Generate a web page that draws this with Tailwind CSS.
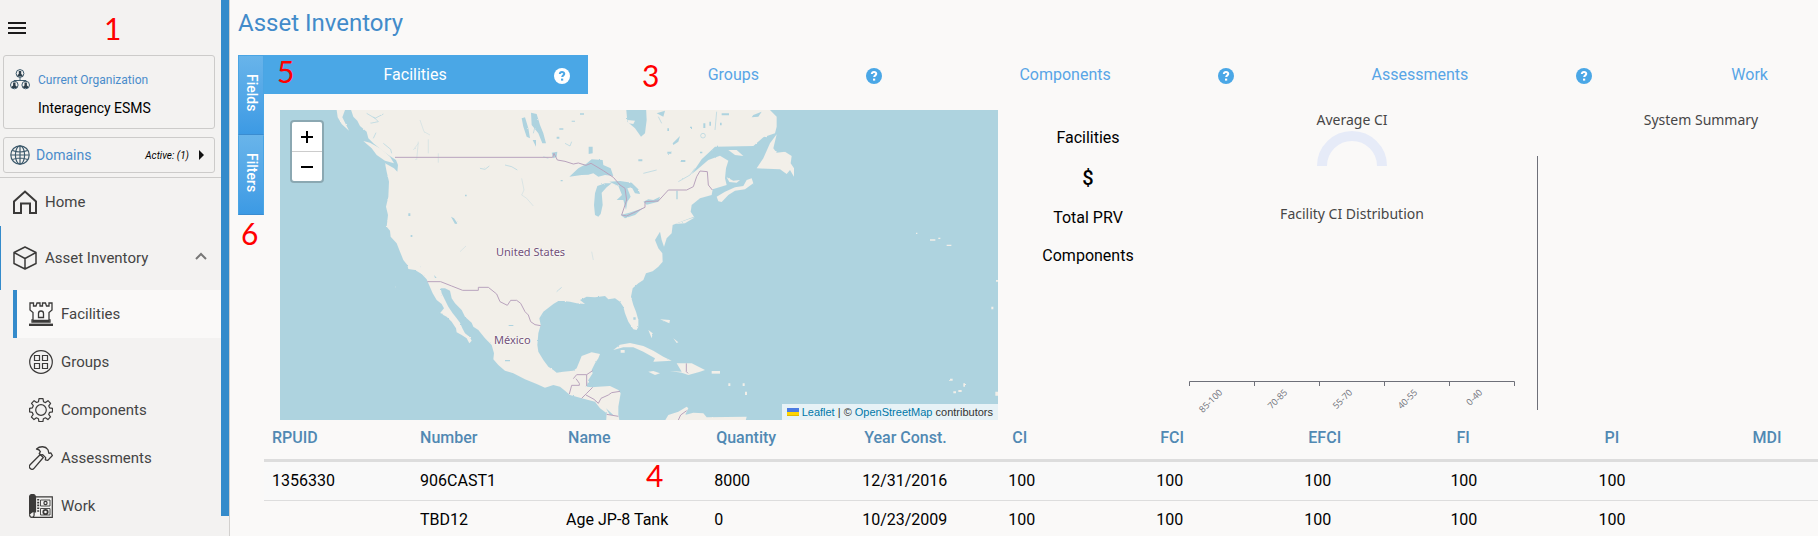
<!DOCTYPE html>
<html lang="en">
<head>
<meta charset="utf-8">
<title>Asset Inventory</title>
<script src="https://cdn.jsdelivr.net/npm/@tailwindcss/browser@4"></script>
</head>
<body class="bg-[#faf9f8] font-['Roboto',sans-serif] text-black">
<div class="relative flex h-screen overflow-hidden">

  <!-- Sidebar -->
  <aside class="flex shrink-0 border-r border-[#d2d0ce] bg-[#f3f2f1]">
    <div class="w-[221px]">
      <div class="flex h-[55px] items-center pl-2">
        <button type="button" aria-label="Toggle menu">
          <svg class="h-3 w-[18px]" viewBox="0 0 18 12" fill="#1b1b1b"><path d="M0 0h18v2H0zM0 5h18v2H0zM0 10h18v2H0z"/></svg>
        </button>
      </div>
      <section class="mx-[3px] mr-[6px] flex h-[74px] rounded-[3px] border border-[#cccbca] pl-1.5">
        <svg class="mt-3 h-[22px] w-[20px] shrink-0" viewBox="0 0 20 22" fill="none" stroke="#3d5a6c">
          <path d="M10 9.500v3M4 14v-1.500h12V14" stroke-width="1"/>
          <circle cx="10" cy="5.500" r="3.900"/><circle cx="4.300" cy="17" r="3.800"/><circle cx="15.700" cy="17" r="3.800"/>
          <g fill="#2c3e4a" stroke="none"><path d="M8.800 3h2.400v3l1.300 1v1.600h-5V7l1.300-1zM3.100 14.500h2.400v3l1.300 1v1.500h-5v-1.500l1.300-1zM14.500 14.500h2.400v3l1.300 1v1.500h-5v-1.500l1.300-1z"/></g>
        </svg>
        <div class="pl-2">
          <h2 class="pt-3.5 text-[12px] leading-5 text-[#4a8ccb]">Current Organization</h2>
          <p class="pt-2 text-[14px] leading-5">Interagency ESMS</p>
        </div>
      </section>
      <button type="button" class="mx-[3px] mt-2 flex h-9 w-[212px] items-center rounded-[3px] border border-[#cccbca] pr-2.5 pl-1.5">
        <svg class="size-5" viewBox="0 0 20 20" fill="none" stroke="#3d5a6c" stroke-width="1.200"><circle cx="10" cy="10" r="9.200"/><ellipse cx="10" cy="10" rx="4.600" ry="9.200"/><path d="M10 1v18M1 10h18M2.500 5.500q7.500 3 15 0M2.500 14.500q7.500-3 15 0"/></svg>
        <span class="pl-1.5 text-[14px] text-[#4a8ccb]">Domains</span>
        <span class="ml-auto pr-2.5 text-[10px] italic">Active: (1)</span>
        <svg class="h-[10px] w-[5px]" viewBox="0 0 5 10"><path d="M0 0l5 5-5 5z" fill="#111"/></svg>
      </button>
      <nav class="mt-1 border-t border-[#cccbca] text-[15px] text-[#444]">
        <a href="#" class="flex h-12 items-center gap-2 pl-[13px]">
          <svg class="size-6" viewBox="0 0 24 24" fill="none" stroke="#3b3a39" stroke-width="2"><path d="M1 23V11.500L12 1.500l11 10V23h-6v-9.500H8V23z"/></svg>
          Home
        </a>
        <a href="#" class="flex h-16 items-center gap-2 border-l border-[#348bcb] pr-[14px] pl-3">
          <svg class="size-6" viewBox="0 0 24 24" fill="none" stroke="#3b3a39" stroke-width="1.500" stroke-linejoin="round"><path d="M12 1l11 5.500v11L12 23 1 17.500v-11zM1 6.500L12 12.500l11-6M12 12.500V23"/></svg>
          Asset Inventory
          <svg class="ml-auto mb-1 h-2 w-3" viewBox="0 0 12 8" fill="none" stroke="#777" stroke-width="2"><path d="M1 7l5-5 5 5"/></svg>
        </a>
        <a href="#" class="ml-[13px] flex h-12 items-center gap-2 border-l-4 border-[#348bcb] bg-[#faf9f8] pl-3">
          <svg class="size-6" viewBox="0 0 24 24" fill="none" stroke="#3b3a39" stroke-width="1.300"><path d="M1 1h3.500v3H7l1-3h3v3h2.500V1h3l1 3h2.500V1H23v7l-3 2.500V18h1v2H3v-2h1v-7.500L1 8zM9.500 15.500v-4a2.500 2.500 0 0 1 5 0v4zM4 18.500h16"/><path d="M0 22.800h24" stroke-width="2.400"/></svg>
          Facilities
        </a>
        <a href="#" class="flex h-12 items-center gap-2 pl-[29px]">
          <svg class="size-6" viewBox="0 0 24 24" fill="none" stroke="#3b3a39" stroke-width="1.200"><circle cx="12" cy="12" r="11.300"/><path d="M5.500 5.500h5v5h-5zM13.500 5.500h5v5h-5zM5.500 13.500h5v5h-5zM13.500 13.500h5v5h-5z"/></svg>
          Groups
        </a>
        <a href="#" class="flex h-12 items-center gap-2 pl-[29px]">
          <svg class="size-6" viewBox="0 0 24 24" fill="none" stroke="#3b3a39" stroke-width="1.200" stroke-linejoin="round"><circle cx="12" cy="12" r="5.300"/><path d="M10 .700h4l.5 3 2 .9 2.500-1.900 2.600 2.600-1.800 2.600.9 2 2.800.5v3.400l-2.900.5-.9 2.100 1.800 2.500-2.600 2.700-2.500-1.800-2 .9-.5 3h-4l-.5-3-2-.9L5 21.600 2.400 19l1.800-2.600-.9-2-2.700-.5v-3.600l2.800-.5.9-2.100-1.800-2.400L5.100 2.700l2.500 1.800 1.900-.8z"/></svg>
          Components
        </a>
        <a href="#" class="flex h-12 items-center gap-2 pl-[29px]">
          <svg class="size-6" viewBox="0 0 24 24" fill="none" stroke="#3b3a39" stroke-width="1.300" stroke-linejoin="round"><path d="M7.500 3C11-.2 16.500 0 18.800 3.500c.9 1.400.4 2.500 1.200 3.800l1.800-.4 1.600 2.600-4.600 4.900-2.500-.6.400-2.200-3-3-2 .4-1.500-1.500 1.200-1.800C10.800 4 9.500 3.300 7.500 3z"/><path d="M11.300 8.500l3 3L5 22.300a2.500 2.500 0 0 1-3.900-3.500z"/></svg>
          Assessments
        </a>
        <a href="#" class="flex h-12 items-center gap-2 pl-[29px]">
          <svg class="size-6" viewBox="0 0 24 24" fill="none" stroke="#3b3a39" stroke-width="1.200"><path d="M6 2.800h17.300v20.500H3.500"/><path d="M.500 3.500Q.500.500 3.500.500T6.500 3.500V18H3L.500 20.500z" fill="#3b3a39"/><path d="M.600 20.500c0 3.700 4.500 3.700 4.500.5V18" fill="#f3f2f1"/><path d="M11.500 6h9.500v6h-9.500zM11.500 14.500h9.500v6.500h-9.500z" stroke-width=".9"/><circle cx="16.500" cy="9" r="1.600"/><circle cx="16.500" cy="18" r="2.200" stroke-width="1.800"/><path d="M9.200 5v13" stroke-dasharray="1.600 1.200" stroke-width="2"/></svg>
          Work
        </a>
      </nav>
    </div>
    <div class="mb-5 w-2 bg-[#348bcb]"></div>
  </aside>

  <!-- Main -->
  <main class="flex min-w-0 flex-1 flex-col pl-2">
    <h1 class="h-[55px] pt-1.5 text-[24px] leading-[34px] text-[#428bca]">Asset Inventory</h1>
    <div class="flex min-h-0 flex-1">
      <div class="flex w-[26px] shrink-0 flex-col text-[14px] font-medium text-white">
        <button type="button" class="flex h-20 items-center justify-center border border-t-[#4aa5e4] border-r-[#4aa5e4] border-b-[#3a8cd0] border-l-[#4aa5e4] bg-linear-to-b from-[#68b4ea] to-[#3c9ae4] pb-1 [writing-mode:vertical-rl]">Fields</button>
        <button type="button" class="flex h-20 items-center justify-center border border-t-[#68b4ea] border-r-[#4aa5e4] border-b-[#3a8cd0] border-l-[#4aa5e4] bg-linear-to-b from-[#68b4ea] to-[#3c9ae4] pb-1 [writing-mode:vertical-rl]">Filters</button>
      </div>

      <div class="min-w-0 flex-1 overflow-hidden">
        <!-- Tabs -->
        <nav class="grid h-[39px] w-[106%] grid-cols-[324fr_312fr_351fr_358fr_301fr] text-[16px] text-[#58a5e6]">
          <div class="flex items-center bg-[#4aa7e6] pr-[18px] text-white">
            <a href="#" class="flex-1 pl-3 text-center">Facilities</a>
            <button type="button" aria-label="Help: Facilities"><svg class="mt-0.5 size-4" viewBox="0 0 16 16" fill="none"><circle cx="8" cy="8" r="8" fill="#fff"/><path d="M5.800 6q.2-2 2.200-2t2.300 1.800c0 1.600-2.100 1.500-2.100 3.200" stroke="#4aa7e6" stroke-width="2"/><path d="M7 10.600h2.200v2H7z" fill="#4aa7e6"/></svg></button>
          </div>
          <div class="flex items-center pr-[18px]">
            <a href="#" class="flex-1 pl-3 text-center">Groups</a>
            <button type="button" aria-label="Help: Groups"><svg class="mt-0.5 size-4" viewBox="0 0 16 16" fill="none"><circle cx="8" cy="8" r="8" fill="#4aa7e6"/><path d="M5.800 6q.2-2 2.200-2t2.300 1.800c0 1.600-2.100 1.500-2.100 3.200" stroke="#fff" stroke-width="2"/><path d="M7 10.600h2.200v2H7z" fill="#fff"/></svg></button>
          </div>
          <div class="flex items-center pr-[18px]">
            <a href="#" class="flex-1 pl-3 text-center">Components</a>
            <button type="button" aria-label="Help: Components"><svg class="mt-0.5 size-4" viewBox="0 0 16 16" fill="none"><circle cx="8" cy="8" r="8" fill="#4aa7e6"/><path d="M5.800 6q.2-2 2.200-2t2.300 1.800c0 1.600-2.100 1.500-2.100 3.200" stroke="#fff" stroke-width="2"/><path d="M7 10.600h2.200v2H7z" fill="#fff"/></svg></button>
          </div>
          <div class="flex items-center pr-[18px]">
            <a href="#" class="flex-1 pl-3 text-center">Assessments</a>
            <button type="button" aria-label="Help: Assessments"><svg class="mt-0.5 size-4" viewBox="0 0 16 16" fill="none"><circle cx="8" cy="8" r="8" fill="#4aa7e6"/><path d="M5.800 6q.2-2 2.200-2t2.300 1.800c0 1.600-2.100 1.500-2.100 3.200" stroke="#fff" stroke-width="2"/><path d="M7 10.600h2.200v2H7z" fill="#fff"/></svg></button>
          </div>
          <div class="flex items-center pr-[34px]">
            <a href="#" class="flex-1 pl-3 text-center">Work</a>
          </div>
        </nav>

        <!-- Summary -->
        <div class="flex pt-4 pl-4">
          <div class="relative h-[310px] w-[718px] shrink-0 overflow-hidden bg-[#aed3df]">
            <svg class="size-full" viewBox="30 30 2154 930" preserveAspectRatio="xMinYMin slice" fill="none">
              <defs><filter id="coast" x="0" y="0" width="100%" height="100%"><feTurbulence type="fractalNoise" baseFrequency="0.120" numOctaves="3" seed="4"/><feDisplacementMap in="SourceGraphic" scale="5" xChannelSelector="R" yChannelSelector="G"/></filter></defs>
              <g filter="url(#coast)">
                <g fill="#f2efe9">
                  <path d="M240 20 250 50 262 62 270 78 290 95 295 115 310 130 335 150 355 165 378 180 384 195 382 215 372 205 345 190 350 215 357 245 355 290 348 320 354 345 350 380 360 392 362 410 380 430 390 455 400 480 412 495 415 507 435 510 455 522 470 538 475 550 488 580 500 600 515 612 522 625 510 640 530 650 545 665 558 685 560 697 575 705 590 715 598 730 605 722 600 712 585 700 577 685 570 668 560 655 548 640 535 620 525 600 515 580 512 565 525 565 540 572 545 595 555 610 575 630 585 650 605 668 610 680 625 690 645 715 665 735 672 760 670 778 685 795 705 812 730 820 765 838 800 852 825 863 850 855 870 860 885 872 900 885 935 895 975 905 990 925 1010 940 1008 970 1050 970 1045 945 1045 920 1052 880 1045 870 1020 858 985 860 965 862 950 860 955 840 968 820 965 810 975 790 985 775 990 762 965 757 935 768 928 785 920 805 910 812 880 815 860 818 850 810 835 800 820 780 805 755 802 735 805 700 812 675 808 655 820 635 850 612 865 603 880 603 900 605 920 610 945 612 930 600 950 590 975 592 1005 588 1015 598 1035 595 1050 605 1060 620 1065 640 1075 665 1090 688 1100 690 1105 680 1105 660 1098 635 1090 615 1083 590 1088 565 1105 550 1120 540 1128 520 1148 514 1165 500 1178 485 1177 460 1165 445 1155 420 1170 395 1175 420 1182 440 1190 415 1205 400 1208 375 1240 362 1272 350 1262 335 1265 315 1290 295 1325 285 1328 268 1370 255 1365 235 1368 205 1375 182 1350 167 1315 180 1280 210 1265 222 1295 178 1335 140 1450 138 1480 112 1515 100 1520 80 1520 50 1490 20 1128 20 1130 60 1125 100 1113 110 1095 85 1072 65 1068 20Z"/>
                  <path d="M280 123 300 128 335 148 360 170 372 190 345 182 320 165 305 145Z"/><path d="M200 30h25l-8 22 20 40-22-20-12-20Z"/>
                  <path d="M1520 103 1500 130 1480 175 1460 205 1530 208 1550 222 1560 210 1572 230 1572 205 1562 190 1565 168 1545 155 1520 158 1510 145Z"/><path d="M1375 150 1400 150 1420 168 1395 165Z"/>
                  <path d="M1340 290 1365 275 1395 262 1420 258 1430 240 1445 235 1450 250 1425 268 1395 272 1375 285 1355 306 1345 304Z"/><path d="M1370 232 1390 242 1410 240 1400 248 1378 246Z"/>
                  <path d="M1030 750 1050 734 1080 729 1120 738 1150 752 1180 770 1205 782 1150 785 1155 775 1120 755 1090 742 1060 742Z"/><path d="M1135 815 1150 813 1170 820 1155 825Z"/><path d="M1200 813 1235 815 1220 790 1265 790 1305 810 1290 815 1255 825 1235 818Z"/><path d="M1325 813h25v8h-25z"/>
                  <path d="M1180 970 1195 945 1225 935 1250 920 1255 925 1245 945 1270 938 1300 940 1310 952 1430 950 1425 970ZM1215 372 1255 358 1275 352 1245 370ZM1072 60 1095 62 1090 72 1075 70ZM1135 690 1148 700 1145 715ZM1052 750h12v8h-12z"/>
                  <path d="M1375 850h6v8h-6zM1418 850h6v8h-6zM1425 875h6v10h-6zM1170 658l30 2-2 10ZM1210 715l15 12-5 2ZM1980 418h16v4h-16zM2005 413h6v4h-6zM2030 434h14v4h-14zM1938 398h4v4h-4zM2178 540h8v5h-8zM2164 620h6v8h-6zM2040 836h8v6h-8zM2050 874h8v6h-8zM2065 870h10v6h-10zM2080 850h5v10h-5zM2176 875h10v12h-10z"/>
                </g>
                <g fill="#aed3df">
                  <path d="M898 230 925 205 948 192 965 178 998 180 1000 195 1022 205 1030 228 1005 225 985 230 970 220 955 224 935 225Z"/><path d="M975 345 972 315 975 280 982 258 1005 250 1025 250 1010 262 995 278 998 315 992 342 985 350Z"/><path d="M1018 245 1050 243 1085 248 1105 268 1110 282 1095 280 1085 262 1072 265 1082 290 1072 305 1068 330 1060 300 1040 300 1056 285 1045 258Z"/>
                  <path d="M1052 345 1078 338 1110 328 1122 322 1095 345 1065 355ZM1120 305 1135 298 1150 300 1170 290 1165 305 1130 314Z"/>
                  <path d="M783 38 800 42 810 75 820 100 828 130 817 130 805 100 785 75ZM755 55 765 52 775 85 780 115 770 110 760 80ZM788 120 798 120 798 140ZM956 140 968 140 968 160 956 162Z"/>
                  <path d="M543 350 552 355 562 370 555 372ZM845 158 862 155 860 170 850 175ZM1208 130 1230 108 1225 125 1210 135ZM1450 45 1475 35 1465 50 1445 52ZM1160 40 1185 32 1180 50ZM1232 180h14v6h-14zM1192 155h12v6h-12zM1105 178h12v6h-12zM1300 70h6v14h-6zM1355 40h22v6h-22zM1318 65h5v12h-5zM1192 85h5v8h-5zM868 85h12v4h-12zM905 62h10v3h-10zM930 40h12v4h-12zM860 110h8v6h-8zM415 340h6v8h-6zM585 284h5v5h-5zM422 405h5v6h-5zM716 675h14v3h-14zM705 780h15v4h-15zM1219 272h4v26h-4zM1090 652h7v7h-7zM505 638 520 642 512 648ZM1008 925 1030 945 1020 945ZM872 240h6v4h-6zM1290 155h7v5h-7zM1350 68h5v8h-5zM1260 80h6v7h-6zM492 525l8 8-5 1Z"/>
                </g>
                <g stroke="#aed3df" stroke-width="2">
                  <path d="M290 40 315 55 340 42M300 70 325 65 310 50M310 115 318 98M365 160 362 148 340 130M630 205 645 208 658 198M705 195 725 200 742 210M885 130 900 138 905 125M820 170 835 175M1225 245 1260 225 1275 205M1120 220 1160 210M1165 50 1175 70M450 500h1M860 575 875 562M1340 35 1335 90M800 60 790 100"/>
                  <circle cx="1299" cy="107" r="7"/>
                </g>
                <g stroke="#cfe0e3" stroke-width="2"><path d="M430 150 445 130M450 60 462 95 480 105M475 160V118M505 188V160M755 235 762 270 755 285 770 295 790 318M965 455 970 480M570 455 588 438M440 180 445 125M375 560 378 562"/></g>
              </g>
              <g stroke="#b9a3bd" stroke-width="3" stroke-linejoin="round">
                <path d="M375 172H848L852 160 862 180 885 184 910 192 925 189 948 196 963 190 1000 212 1030 232 1050 255 1065 265 1070 300 1055 345 1070 348 1125 322V305L1165 303 1195 270H1250L1270 260 1280 230 1290 213 1312 215 1315 255 1327 270"/>
                <path d="M472 545H512L545 558 578 571H625V562H655L680 582 690 605 712 616 722 601H740L752 610 765 635 775 645 782 665 795 674 812 677"/>
                <path d="M918 836 928 850V856H905L898 882M910 836 920 824H950V858M950 824 968 812M935 895 950 880 968 862M948 885 972 898 985 910 993 895 1015 885 1025 878 1050 874M1010 943 1045 949M1249 790V815L1254 820M1225 960 1232 945 1250 932"/>
              </g>
            </svg>
            <span class="absolute top-[132px] left-[216px] font-['Noto_Sans',sans-serif] text-[11px] leading-5 text-[#725078] [text-shadow:0_0_2px_#fff,0_0_2px_#fff]">United States</span>
            <span class="absolute top-[220px] left-[214px] font-['Noto_Sans',sans-serif] text-[11px] leading-5 text-[#725078] [text-shadow:0_0_2px_#fff,0_0_2px_#fff]">México</span>
            <div class="absolute top-2.5 left-2.5 flex w-[34px] flex-col overflow-hidden rounded-[4px] border-2 border-black/20 bg-white bg-clip-padding">
              <button type="button" aria-label="Zoom in" class="flex h-[30px] items-center justify-center border-b border-[#ccc]"><svg class="size-3" viewBox="0 0 12 12"><path d="M5 0h2v5h5v2H7v5H5V7H0V5h5z"/></svg></button>
              <button type="button" aria-label="Zoom out" class="flex h-[29px] items-center justify-center"><svg class="size-3" viewBox="0 0 12 12"><path d="M0 5h12v2H0z"/></svg></button>
            </div>
            <div class="absolute right-0 bottom-0 flex h-4 items-center bg-white/70 px-[5px] font-['Liberation_Sans',sans-serif] text-[11px] text-[#333]">
              <svg class="mr-[3px] h-2 w-3" viewBox="0 0 12 8"><path fill="#4c7be1" d="M0 0h12v4H0z"/><path fill="#ffd500" d="M0 4h12v3H0z"/><path fill="#e0bc00" d="M0 7h12v1H0z"/></svg>
              <a href="#" class="text-[#0078a8]">Leaflet</a><span class="whitespace-pre"> | © </span><a href="#" class="text-[#0078a8]">OpenStreetMap</a><span class="whitespace-pre"> contributors</span>
            </div>
          </div>

          <div class="w-[180px] shrink-0 pt-4 text-center text-[16px] leading-6">
            <p>Facilities</p>
            <p class="pt-4 text-[20px] font-medium">$</p>
            <p class="pt-4">Total PRV</p>
            <p class="pt-3.5">Components</p>
          </div>

          <div class="flex flex-1 text-center font-['Noto_Sans','Open_Sans',sans-serif] text-[14px] leading-5 text-[#464646]">
            <div class="flex w-[348px] shrink-0 flex-col items-center">
              <h3>Average CI</h3>
              <svg class="mt-px h-[35px] w-[70px]" viewBox="0 0 70 35"><path d="M5 35a30 30 0 0 1 60 0" fill="none" stroke="#e6ebf8" stroke-width="10"/></svg>
              <h3 class="pt-[38px]">Facility CI Distribution</h3>
              <svg class="mt-[156px] h-10 w-[326px]" viewBox="0 0 326 40" font-family="Open Sans, Noto Sans, sans-serif" font-size="9" fill="#6e7079" text-anchor="end">
                <path d="M.500 6V1.500H325.500V6M65.500 1.500V6M130.500 1.500V6M195.500 1.500V6M260.500 1.500V6" fill="none" stroke="#6e7079"/>
                <text transform="translate(34 13) rotate(-45)">85-100</text>
                <text transform="translate(99 13) rotate(-45)">70-85</text>
                <text transform="translate(164 13) rotate(-45)">55-70</text>
                <text transform="translate(229 13) rotate(-45)">40-55</text>
                <text transform="translate(294 13) rotate(-45)">0-40</text>
              </svg>
            </div>
            <div class="mt-[46px] ml-[11px] h-[254px] w-px bg-[#6e7079]"></div>
            <h3 class="w-[326px]">System Summary</h3>
          </div>
        </div>

        <!-- Assets -->
        <table class="w-[104.8%] table-fixed text-left text-[16px]">
          <thead class="text-[#5189b3]">
            <tr class="h-10 border-b-3 border-[#ddd]">
              <th class="pb-0.5 pl-2 font-medium">RPUID</th><th class="pb-0.5 pl-2 font-medium">Number</th><th class="pb-0.5 pl-2 font-medium">Name</th><th class="pb-0.5 pl-2 font-medium">Quantity</th><th class="pb-0.5 pl-2 font-medium">Year Const.</th><th class="pb-0.5 pl-2 font-medium">CI</th><th class="pb-0.5 pl-2 font-medium">FCI</th><th class="pb-0.5 pl-2 font-medium">EFCI</th><th class="pb-0.5 pl-2 font-medium">FI</th><th class="pb-0.5 pl-2 font-medium">PI</th><th class="pb-0.5 pl-2 font-medium">MDI</th>
            </tr>
          </thead>
          <tbody>
            <tr class="h-10 border-b border-[#ddd] bg-[#f9f9f9]">
              <td class="pl-2">1356330</td><td class="pl-2">906CAST1</td><td></td><td class="pl-1.5">8000</td><td class="pl-1.5">12/31/2016</td><td class="pl-1">100</td><td class="pl-1">100</td><td class="pl-1">100</td><td class="pl-0.5">100</td><td class="pl-0.5">100</td><td></td>
            </tr>
            <tr class="h-10 border-b border-[#ddd]">
              <td></td><td class="pl-2">TBD12</td><td class="pl-1.5">Age JP-8 Tank</td><td class="pl-1.5">0</td><td class="pl-1.5">10/23/2009</td><td class="pl-1">100</td><td class="pl-1">100</td><td class="pl-1">100</td><td class="pl-0.5">100</td><td class="pl-0.5">100</td><td></td>
            </tr>
          </tbody>
        </table>
      </div>
    </div>
  </main>

  <!-- Callout numbers laid over the page -->
  <div class="pointer-events-none absolute inset-0 font-['Lato','Open_Sans',sans-serif] text-[30px] leading-8 text-[#f00]">
    <span class="absolute top-[12px] left-[104px]">1</span>
    <span class="absolute top-[59px] left-[642px]">3</span>
    <span class="absolute top-[459px] left-[646px]">4</span>
    <span class="absolute top-[55px] left-[277px]">5</span>
    <span class="absolute top-[217px] left-[241px]">6</span>
  </div>
</div>
</body>
</html>
